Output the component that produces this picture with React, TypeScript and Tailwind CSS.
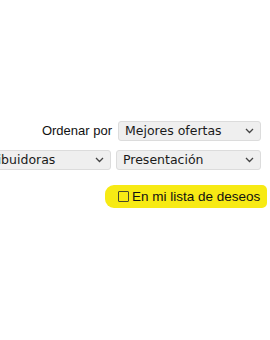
import React from 'react';

function Chevron() {
  return (
    <svg width="9" height="6" viewBox="0 0 9 6" fill="none" className="shrink-0">
      <path d="M1 1l3.5 3.5L8 1" stroke="#444" strokeWidth="1.3" />
    </svg>
  );
}

function FakeSelect({ label, className }: { label: string; className: string }) {
  return (
    <div
      className={`h-[20px] shrink-0 flex items-center justify-between bg-[#efefef] border border-[#dcdcdc] rounded-[3px] pl-[6px] pr-[6px] text-[12.5px] text-[#1a1a1a] ${className}`}
      style={{ fontFamily: '"DejaVu Sans", Verdana, sans-serif' }}
    >
      <span className="leading-none">{label}</span>
      <Chevron />
    </div>
  );
}

export default function App() {
  return (
    <div className="w-[270px] h-[340px] bg-white overflow-hidden" style={{ fontFamily: '"Liberation Sans", Arial, sans-serif' }}>
      <div className="pt-[121px] pr-[9px]">
        <div className="flex items-center justify-end gap-[6px]">
          <span className="text-[13px] text-[#111]">Ordenar por</span>
          <FakeSelect label="Mejores ofertas" className="w-[143px]" />
        </div>

        <div className="mt-[9px] flex items-center justify-end gap-[5px]">
          <FakeSelect label="Distribuidoras" className="w-[150px]" />
          <FakeSelect label="Presentación" className="w-[145px]" />
        </div>
      </div>

      <div className="mt-[15px] flex justify-end pr-[3px]">
        <div className="h-[23px] w-[162px] bg-[#f7ea14] rounded-l-[9px] rounded-r-[5px] flex items-center pl-[13px]">
          <span className="w-[11px] h-[11px] border border-[#4a4a2a] rounded-[1px] shrink-0" />
          <span className="ml-[3px] text-[13.5px] text-[#111] leading-none">En mi lista de deseos</span>
        </div>
      </div>
    </div>
  );
}
